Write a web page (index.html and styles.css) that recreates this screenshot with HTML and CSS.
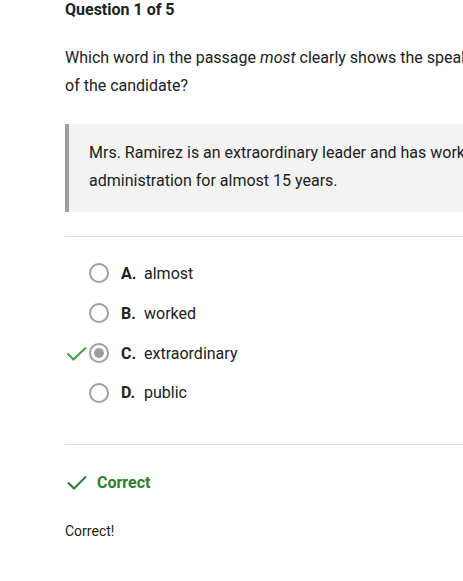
FILE: index.html
```html
<!DOCTYPE html>
<html lang="en">
<head>
<meta charset="utf-8">
<title>Question 1 of 5</title>
<link rel="stylesheet" href="styles.css">
</head>
<body>
<main class="quiz">
  <h1 class="q-title">Question 1 of 5</h1>
  <p class="q-text">Which word in the passage <em>most</em> clearly shows the speaker's opinion of the candidate?</p>
  <blockquote class="passage">Mrs. Ramirez is an extraordinary leader and has worked in public administration for almost 15 years.</blockquote>
  <hr class="divider">
  <ul class="options">
    <li class="option">
      <span class="mark"></span>
      <span class="radio"></span>
      <span class="letter">A.</span>
      <span class="answer">almost</span>
    </li>
    <li class="option">
      <span class="mark"></span>
      <span class="radio"></span>
      <span class="letter">B.</span>
      <span class="answer">worked</span>
    </li>
    <li class="option">
      <span class="mark">
        <svg width="24" height="24" viewBox="0 0 24 24"><path d="M2.5 12.5l6 6L21 6.5" fill="none" stroke="#43a047" stroke-width="2"/></svg>
      </span>
      <span class="radio selected"></span>
      <span class="letter">C.</span>
      <span class="answer">extraordinary</span>
    </li>
    <li class="option">
      <span class="mark"></span>
      <span class="radio"></span>
      <span class="letter">D.</span>
      <span class="answer">public</span>
    </li>
  </ul>
  <hr class="divider lower">
  <div class="result">
    <svg width="24" height="24" viewBox="0 0 24 24"><path d="M3 12.5l6 6L21 6.5" fill="none" stroke="#2e7d32" stroke-width="2"/></svg>
    <span class="result-label">Correct</span>
  </div>
  <p class="feedback">Correct!</p>
</main>
</body>
</html>
```

FILE: styles.css
```css
html, body {
  margin: 0;
  padding: 0;
  background: #fff;
  overflow: hidden;
}
body {
  font-family: Roboto, "Liberation Sans", sans-serif;
  color: #212121;
}
.quiz {
  width: 530px;
  padding: 0 0 0 65px;
}
.q-title {
  margin: 0;
  font-size: 16px;
  line-height: 20px;
  font-weight: 700;
}
.q-text {
  max-width: 492px;
  margin: 24px 0 0;
  font-size: 16px;
  line-height: 28px;
}
.q-text em {
  font-style: italic;
}
.passage {
  margin: 24px 0 0;
  padding: 15px 20px 17px 20px;
  border-left: 4px solid #9e9e9e;
  background: #f3f3f3;
  font-size: 16px;
  line-height: 28px;
}
.divider {
  margin: 24px 0 0;
  border: 0;
  border-top: 1px solid #e0e0e0;
  height: 0;
}
.options {
  list-style: none;
  margin: 16px 0 0;
  padding: 0;
}
.option {
  display: flex;
  align-items: center;
  height: 40px;
  font-size: 16px;
}
.option:last-child {
  height: 39px;
}
.mark {
  width: 24px;
  display: flex;
  align-items: center;
  justify-content: flex-start;
}
.radio {
  box-sizing: border-box;
  width: 20px;
  height: 20px;
  border: 2px solid #9e9e9e;
  border-radius: 50%;
  display: flex;
  align-items: center;
  justify-content: center;
  margin-right: 12px;
}
.radio.selected::after {
  content: "";
  width: 10px;
  height: 10px;
  border-radius: 50%;
  background: #9e9e9e;
}
.letter {
  font-weight: 700;
  width: 23px;
}
.answer {
  color: #212121;
}
.divider.lower {
  margin-top: 32px;
}
.result {
  display: flex;
  align-items: center;
  gap: 8px;
  margin-top: 25px;
  height: 24px;
}
.result-label {
  font-size: 16px;
  font-weight: 700;
  color: #2e7d32;
}
.feedback {
  margin: 27px 0 0;
  font-size: 14px;
  line-height: 20px;
}
```
